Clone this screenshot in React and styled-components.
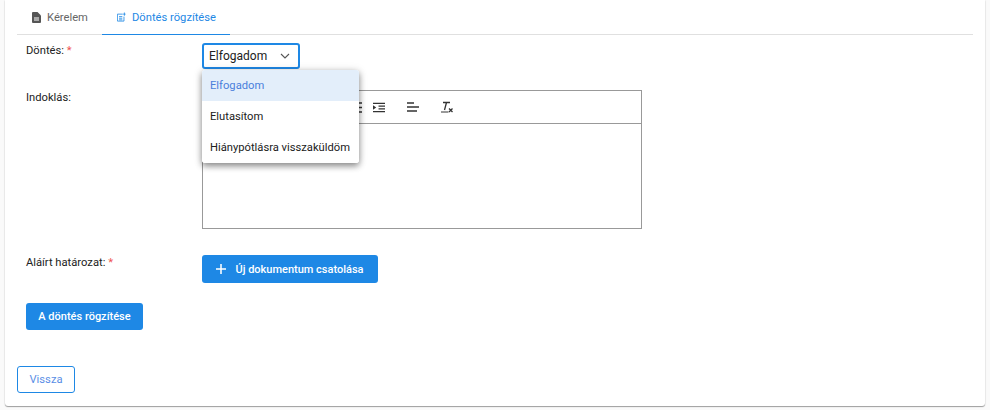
import React from 'react';
import styled, { createGlobalStyle } from 'styled-components';

const Global = createGlobalStyle`
  html, body { margin: 0; padding: 0; background: #fafafa; }
  body { font-family: Roboto, "Liberation Sans", sans-serif; }
  * { box-sizing: border-box; }
`;
const Page = styled.div`
  width: 990px; height: 410px; padding: 0 5px 4px; overflow: hidden;
`;
const Card = styled.div`
  height: 406px; background: #fff; border-radius: 0 0 3px 3px;
  box-shadow: 0 1px 1px rgba(0,0,0,.35), 0 0 2px rgba(0,0,0,.12);
  padding: 0 12px 0 12px; display: flex; flex-direction: column;
`;
const Tabs = styled.div`
  height: 35px; display: flex; border-bottom: 1px solid #e0e0e0; align-items: stretch;
`;
const Tab = styled.div`
  display: flex; align-items: center; gap: 6px;
  width: ${p => p.$w}px; padding-left: 15px; font-size: 11.2px; margin-bottom: -1px;
  color: ${p => (p.$active ? '#1e88e5' : '#666')};
  border-bottom: 1px solid ${p => (p.$active ? '#1e88e5' : 'transparent')};
`;
const Form = styled.div`
  padding: 8px 0 0 9px; flex: 1; display: flex; flex-direction: column;
`;
const Row = styled.div`
  display: grid; grid-template-columns: 176px 1fr; margin-bottom: ${p => p.$mb}px; position: relative;
`;
const Label = styled.div`
  font-size: 11.2px; line-height: 14px; color: #222; padding-top: 1px;
`;
const Star = styled.span`color: #ef5350;`;
const Select = styled.div`
  width: 98px; height: 26px; border: 2px solid #1e88e5; border-radius: 3px;
  display: flex; align-items: center; justify-content: space-between;
  padding: 0 8px 0 5px; font-size: 12px; color: #212121;
`;
const Menu = styled.div`
  position: absolute; left: 176px; top: 27px; width: 157px; background: #fff; border-radius: 3px;
  box-shadow: 0 3px 6px rgba(0,0,0,.4), 0 1px 10px rgba(0,0,0,.15); z-index: 5; overflow: hidden;
`;
const MenuItem = styled.div`
  height: 31px; display: flex; align-items: center; padding: 0 0 1px 8px; font-size: 11.2px; white-space: nowrap;
  background: ${p => (p.$sel ? '#e3eefa' : '#fff')};
  color: ${p => (p.$sel ? '#4a7fdc' : '#212121')};
`;
const Editor = styled.div`
  width: 440px; height: 139px; border: 1px solid #999;
`;
const Toolbar = styled.div`
  height: 33px; border-bottom: 1px solid #999; display: flex; align-items: center; padding-left: 146px; gap: 22px;
`;
const ToolGroup = styled.div`
  display: flex; align-items: center; gap: 11px;
`;
const Primary = styled.button`
  height: ${p => p.$h}px; width: ${p => p.$w}px; border: 0; border-radius: 3px; background: #1e88e5; color: #fff;
  font: 500 11px Roboto, sans-serif; display: flex; align-items: center; justify-content: center; gap: 9px; padding: 0;
`;
const Back = styled.button`
  margin: auto 0 0 -9px; width: 58px; height: 27px; border: 1px solid #1e88e5; border-radius: 3px; background: #fff;
  color: #5b8fe6; font: 400 11.2px Roboto, sans-serif; padding: 0;
`;
const Footer = styled.div`display: flex; flex: 1; padding-bottom: 13px;`;

const DocIcon = () => (
  <svg width="9" height="11" viewBox="0 0 9 11"><path fill="#555" d="M1 0h4.500L9 3.500V10a1 1 0 0 1-1 1H1a1 1 0 0 1-1-1V1a1 1 0 0 1 1-1z" /><path stroke="#fff" strokeWidth="1" d="M2 6h5M2 8h5" /></svg>
);
const NoteIcon = () => (
  <svg width="9" height="10" viewBox="0 0 11 11" fill="none" stroke="#1e88e5"><path d="M7 2H.5v8.500h8V5" /><path d="M2.500 5h4M2.500 7h4M2.500 9h4" /><path d="M9 0v4M7.500 2h3" /></svg>
);
const Chevron = () => (
  <svg width="10" height="6" viewBox="0 0 10 6" fill="none" stroke="#555" strokeWidth="1.1"><path d="M1 1l4 4 4-4" /></svg>
);
const ListIcon = () => (
  <svg width="13" height="11" viewBox="0 0 13 11" fill="none" stroke="#333" strokeWidth="1.4"><path d="M0 1h13M0 5.500h13M0 10h13" /></svg>
);
const IndentIcon = () => (
  <svg width="12" height="11" viewBox="0 0 13 11" fill="none" stroke="#333" strokeWidth="1.4"><path d="M0 1h13M6 4h7M6 7h7M0 10h13" /><path fill="#333" stroke="none" d="M0 3l3.500 2.500L0 8z" /></svg>
);
const AlignIcon = () => (
  <svg width="12" height="10" viewBox="0 0 12 10" fill="none" stroke="#333" strokeWidth="1.4"><path d="M0 1h7M0 5h12M0 9h10" /></svg>
);
const ClearIcon = () => (
  <svg width="12" height="12" viewBox="0 0 12 12" fill="none" stroke="#333"><path strokeWidth="1.3" d="M2 1.500h7M5.500 1.500L3.500 9" /><path d="M0 11h7.500" /><path strokeWidth="1.300" d="M8 7.500l3.500 3.500M11.500 7.500L8 11" /></svg>
);
const Plus = () => (
  <svg width="10" height="10" viewBox="0 0 11 11" stroke="#fff" strokeWidth="1.7"><path d="M5.500 0v11M0 5.500h11" /></svg>
);

export default function App() {
  return (
    <Page>
      <Global />
      <Card>
        <Tabs>
          <Tab $w={85}><DocIcon />Kérelem</Tab>
          <Tab $w={128} $active><NoteIcon />Döntés rögzítése</Tab>
        </Tabs>
        <Form>
          <Row $mb={21}>
            <Label>Döntés: <Star>*</Star></Label>
            <Select>Elfogadom<Chevron /></Select>
            <Menu>
              <MenuItem $sel>Elfogadom</MenuItem>
              <MenuItem>Elutasítom</MenuItem>
              <MenuItem>Hiánypótlásra visszaküldöm</MenuItem>
            </Menu>
          </Row>
          <Row $mb={26}>
            <Label>Indoklás:</Label>
            <Editor>
              <Toolbar>
                <ToolGroup><ListIcon /><IndentIcon /></ToolGroup>
                <AlignIcon />
                <ClearIcon />
              </Toolbar>
            </Editor>
          </Row>
          <Row $mb={20}>
            <Label>Aláírt határozat: <Star>*</Star></Label>
            <Primary $w={176} $h={28}><Plus />Új dokumentum csatolása</Primary>
          </Row>
          <Primary $w={117} $h={27}>A döntés rögzítése</Primary>
          <Footer><Back>Vissza</Back></Footer>
        </Form>
      </Card>
    </Page>
  );
}
